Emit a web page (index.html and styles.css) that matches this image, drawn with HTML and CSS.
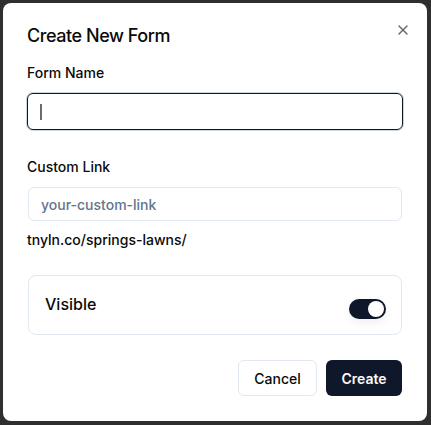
FILE: index.html
```html
<!DOCTYPE html>
<html>
<head>
<meta charset="utf-8">
<link rel="stylesheet" href="styles.css">
</head>
<body>
<div class="dialog">
  <button class="close" aria-label="Close">
    <svg width="16" height="16" viewBox="0 0 24 24" fill="none" stroke="currentColor" stroke-width="2" stroke-linecap="round" stroke-linejoin="round"><path d="M18 6 6 18"/><path d="m6 6 12 12"/></svg>
  </button>
  <h2 class="title">Create New Form</h2>
  <label class="label first">Form Name</label>
  <div class="input focused"><span class="caret"></span></div>
  <label class="label second">Custom Link</label>
  <div class="input plain"><span class="placeholder">your-custom-link</span></div>
  <div class="hint">tnyln.co/springs-lawns/</div>
  <div class="card">
    <span class="card-label">Visible</span>
    <span class="switch"><span class="thumb"></span></span>
  </div>
  <div class="footer">
    <button class="btn outline">Cancel</button>
    <button class="btn primary">Create</button>
  </div>
</div>
</body>
</html>
```
FILE: styles.css
```css
* { box-sizing: border-box; }
html, body { margin: 0; padding: 0; }
body {
  background: #2f2f2f;
  font-family: Inter, "Noto Sans", sans-serif;
  color: #0a0a0a;
  width: 431px;
  height: 425px;
  overflow: hidden;
}
.dialog {
  position: relative;
  margin: 3px 0 0 3px;
  width: 424px;
  height: 418px;
  background: #fff;
  border-radius: 8px;
  padding: 24px 24px 0 24px;
  display: flex;
  flex-direction: column;
}
.close {
  position: absolute;
  top: 19px;
  right: 16px;
  width: 16px;
  height: 16px;
  padding: 0;
  border: 0;
  background: none;
  color: #666;
  display: flex;
}
.title {
  margin: 0;
  font-size: 18px;
  line-height: 18px;
  font-weight: 500;
  letter-spacing: -0.45px;
  height: 18px;
}
.label {
  font-size: 14px;
  line-height: 14px;
  font-weight: 500;
  height: 14px;
}
.label.first { margin-top: 21px; }
.label.second { margin-top: 30px; }
.input {
  border-radius: 6px;
  display: flex;
  align-items: center;
  padding: 0 12px;
}
.input.focused {
  margin-top: 13px;
  height: 37px;
  border: 1px solid #0f172a;
  box-shadow: 0 0 0 1px #cbd5e1;
}
.caret {
  width: 2px;
  height: 16px;
  background: #6b6b6b;
}
.input.plain {
  margin: 13px 1px 0 1px;
  height: 34px;
  border: 1px solid #e2e8f0;
}
.placeholder {
  font-size: 14px;
  font-weight: 500;
  color: #64748b;
}
.hint {
  margin-top: 9px;
  font-size: 14px;
  line-height: 20px;
  font-weight: 500;
}
.card {
  margin: 25px 1px 0 1px;
  height: 60px;
  border: 1px solid #e2e8f0;
  border-radius: 8px;
  display: flex;
  align-items: center;
  justify-content: space-between;
  padding: 0 15px 0 16px;
}
.card-label {
  font-size: 16px;
  font-weight: 500;
  margin-top: -2px;
}
.switch {
  width: 37px;
  height: 20px;
  border-radius: 10px;
  background: #0f172a;
  display: flex;
  align-items: center;
  justify-content: flex-end;
  padding: 2px;
  margin-top: 8px;
  box-shadow: 0 4px 10px rgba(15, 23, 42, 0.06);
}
.thumb {
  width: 16px;
  height: 16px;
  border-radius: 50%;
  background: #fff;
}
.footer {
  margin-top: 25px;
  display: flex;
  justify-content: flex-end;
  gap: 9px;
  padding-right: 1px;
}
.btn {
  height: 36px;
  border-radius: 6px;
  font-family: inherit;
  font-size: 14px;
  font-weight: 500;
  padding: 0 12px;
}
.btn.outline {
  background: #fff;
  border: 1px solid #e2e8f0;
  color: #0a0a0a;
  width: 79px;
}
.btn.primary {
  background: #0f172a;
  border: 0;
  color: #f8fafc;
  width: 76px;
  font-weight: 600;
}
```
